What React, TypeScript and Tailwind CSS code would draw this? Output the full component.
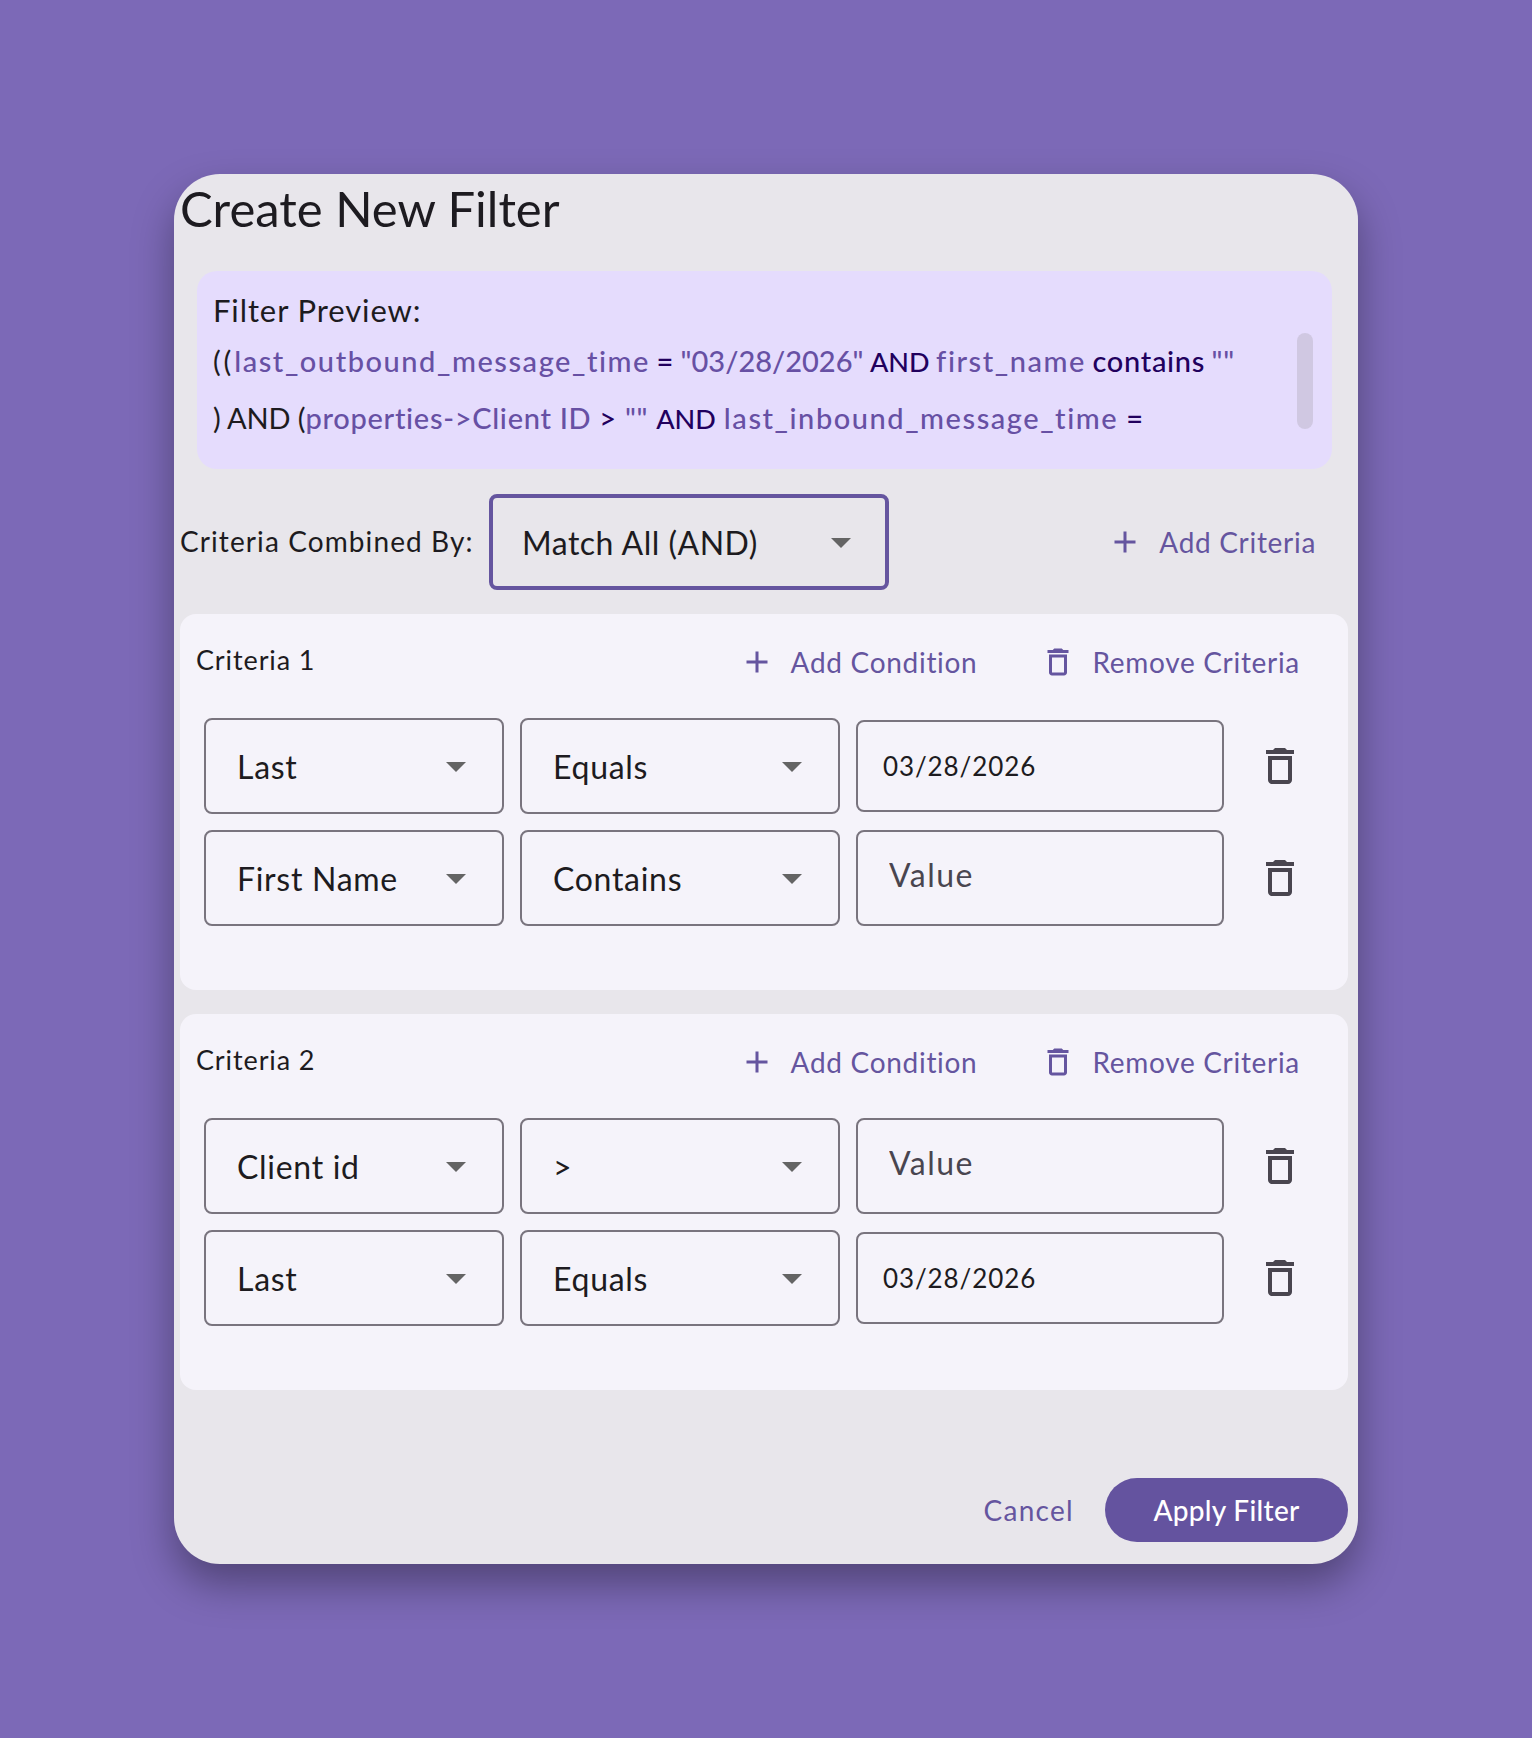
const font = { fontFamily: '"Lato", "Liberation Sans", sans-serif' };

function TrashIcon({ size = 48, className = '' }: { size?: number; className?: string }) {
  return (
    <svg width={size} height={size} viewBox="0 0 24 24" fill="currentColor" className={className}>
      <path d="M6 19c0 1.1.9 2 2 2h8c1.1 0 2-.9 2-2V7H6v12zM8 9h8v10H8V9zm7.5-5-1-1h-5l-1 1H5v2h14V4h-3.5z" />
    </svg>
  );
}

function PlusIcon() {
  return (
    <svg width={36} height={36} viewBox="0 0 24 24" fill="currentColor">
      <path d="M19 13h-6v6h-2v-6H5v-2h6V5h2v6h6v2z" />
    </svg>
  );
}

function Arrow() {
  return (
    <svg width={48} height={48} viewBox="0 0 24 24" fill="#646464" className="shrink-0">
      <path d="M7 10l5 5 5-5z" />
    </svg>
  );
}

function Select({ label, width }: { label: string; width: string }) {
  return (
    <div className={`flex h-[96px] items-center justify-between rounded-[8px] border-2 border-[#79747e] pl-[31px] pr-[22px] ${width}`}>
      <span className="pt-[2px] text-[32px] tracking-[0.7px] text-[#1d1b20]">{label}</span>
      <Arrow />
    </div>
  );
}

type Row = { field: string; op: string; value?: string };

function ConditionRow({ field, op, value }: Row) {
  return (
    <div className="flex items-center pl-[24px]">
      <Select label={field} width="w-[300px]" />
      <div className="ml-[16px]">
        <Select label={op} width="w-[320px]" />
      </div>
      {value ? (
        <input
          readOnly
          value={value}
          className="ml-[16px] h-[92px] w-[368px] rounded-[8px] border-2 border-[#79747e] bg-transparent pl-[25px] text-[26px] tracking-[0.9px] text-[#1d1b20] outline-none"
        />
      ) : (
        <input
          readOnly
          placeholder="Value"
          className="ml-[16px] h-[96px] w-[368px] rounded-[8px] border-2 border-[#79747e] bg-transparent pb-[8px] pl-[31px] text-[32px] tracking-[1.5px] outline-none placeholder:text-[#49454f]"
        />
      )}
      <TrashIcon className="ml-[32px] text-[#49454f]" />
    </div>
  );
}

function LinkButton({ icon, label }: { icon: React.ReactNode; label: string }) {
  return (
    <div className="flex items-center text-[#65559f]">
      {icon}
      <span className="ml-[16px] text-[28px] tracking-[0.7px]">{label}</span>
    </div>
  );
}

function CriteriaCard({ title, rows }: { title: string; rows: Row[] }) {
  return (
    <div className="h-[376px] rounded-[16px] bg-[#f5f3fa]">
      <div className="mb-[8px] flex h-[96px] items-center pl-[16px] pr-[48px]">
        <span className="-mt-[4px] text-[27px] tracking-[0.9px] text-[#1d1b20]">{title}</span>
        <div className="ml-auto flex items-center gap-[63px]">
          <LinkButton icon={<PlusIcon />} label="Add Condition" />
          <LinkButton icon={<TrashIcon size={36} />} label="Remove Criteria" />
        </div>
      </div>
      <div className="flex flex-col gap-[16px]">
        {rows.map((r, i) => (
          <ConditionRow key={i} {...r} />
        ))}
      </div>
    </div>
  );
}

export default function App() {
  const field = 'text-[#6750a4] tracking-[1.55px]';
  const and = 'text-[27px] tracking-[0px]';
  return (
    <div style={font} className="flex min-h-[1738px] items-center justify-center bg-[#7c69b7]">
      <div className="flex h-[1390px] w-[1184px] flex-col rounded-[46px] bg-[#e8e6eb] pl-[6px] pr-[10px] shadow-[0_20px_40px_rgba(0,0,0,0.35)]">
        <h1 className="h-[72px] text-[49px] leading-[68px] text-[#1d1b20]">Create New Filter</h1>

        <div className="relative ml-[17px] mr-[16px] mt-[25px] h-[198px] rounded-[20px] bg-[#e5dcfd] pl-[16px] text-[29px]">
          <div className="pt-[20px] text-[31px] leading-[38px] tracking-[0.9px] text-[#1d1b20]">Filter Preview:</div>
          <div className="mt-[3px] whitespace-nowrap leading-[58px] tracking-[0.7px] font-medium text-[#21005d]">
            <div className="h-[57px] [word-spacing:-1.5px]">
              <span className="font-normal tracking-[2.85px] text-[#1d1b20]">((</span>
              <span className={field}>last_outbound_message_time</span> ={' '}
              <span className="tracking-[0px] text-[#6750a4]">"03/28/2026"</span> <span className={and}>AND</span>{' '}
              <span className={field}>first_name</span> contains{' '}
              <span className="text-[#6750a4]">""</span>
            </div>
            <div className="h-[57px]">
              <span className="font-normal tracking-[-0.1px] text-[#1d1b20]">) AND (</span>
              <span className="tracking-[0.7px] text-[#6750a4]">properties-&gt;Client ID</span> &gt;{' '}
              <span className="text-[#6750a4]">""</span> <span className={and}>AND</span>{' '}
              <span className={field}>last_inbound_message_time</span> =
            </div>
          </div>
          <div className="absolute right-[19px] top-[62px] h-[96px] w-[16px] rounded-full bg-[#d0c8e2]" />
        </div>

        <div className="mt-[25px] flex h-[96px] items-center pr-[32px]">
          <span className="-mt-[2px] w-[309px] text-[28px] tracking-[1.1px] text-[#1d1b20]">Criteria Combined By:</span>
          <div className="flex h-[96px] w-[400px] items-center justify-between rounded-[8px] border-[4px] border-[#65559f] pl-[29px] pr-[20px]">
            <span className="pt-[2px] text-[32px] tracking-[0.5px] text-[#1d1b20]">Match All (AND)</span>
            <Arrow />
          </div>
          <div className="ml-auto">
            <LinkButton icon={<PlusIcon />} label="Add Criteria" />
          </div>
        </div>

        <div className="mt-[24px] flex flex-col gap-[24px]">
          <CriteriaCard
            title="Criteria 1"
            rows={[
              { field: 'Last', op: 'Equals', value: '03/28/2026' },
              { field: 'First Name', op: 'Contains' },
            ]}
          />
          <CriteriaCard
            title="Criteria 2"
            rows={[
              { field: 'Client id', op: '>' },
              { field: 'Last', op: 'Equals', value: '03/28/2026' },
            ]}
          />
        </div>

        <div className="mt-auto flex items-center justify-end pb-[22px]">
          <span className="mr-[31px] text-[28px] tracking-[1.3px] text-[#65559f]">Cancel</span>
          <div className="flex h-[64px] w-[243px] items-center justify-center rounded-full bg-[#64539f] text-[28px] font-medium tracking-[0.3px] text-white">
            Apply Filter
          </div>
        </div>
      </div>
    </div>
  );
}
